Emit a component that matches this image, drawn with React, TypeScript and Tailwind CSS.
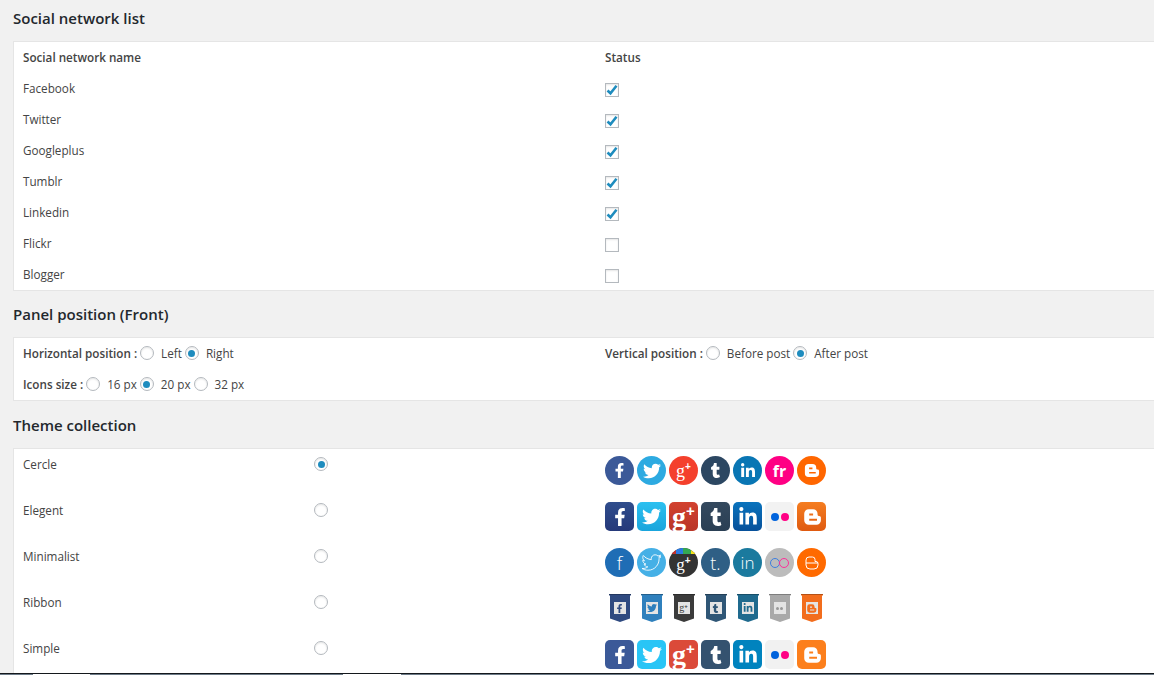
import React from 'react'
import { FaFacebookF, FaTwitter, FaTumblr, FaLinkedinIn } from 'react-icons/fa'

const networks = [
  { name: 'Facebook', on: true },
  { name: 'Twitter', on: true },
  { name: 'Googleplus', on: true },
  { name: 'Tumblr', on: true },
  { name: 'Linkedin', on: true },
  { name: 'Flickr', on: false },
  { name: 'Blogger', on: false },
]

function Radio({ on }: { on?: boolean }) {
  return (
    <span className="w-3.5 h-3.5 mt-[3px] rounded-full border border-[#b4b9be] bg-white flex items-center justify-center shrink-0 shadow-[inset_0_1px_2px_rgba(0,0,0,0.1)]">
      {on && <span className="w-[7px] h-[7px] rounded-full bg-[#1e8cbe]" />}
    </span>
  )
}

function Checkbox({ on }: { on: boolean }) {
  return (
    <span className="w-3.5 h-3.5 border border-[#b4b9be] bg-white flex items-center justify-center shadow-[inset_0_1px_2px_rgba(0,0,0,0.1)]">
      {on && (
        <svg width="12" height="12" viewBox="0 0 12 12" fill="none" stroke="#1e8cbe" strokeWidth="2.6">
          <path d="M1.500 6.500L4.500 9.300L10.500 1.800" />
        </svg>
      )}
    </span>
  )
}

function RadioOption({ label, on }: { label: string; on?: boolean }) {
  return (
    <span className="flex items-start">
      <Radio on={on} />
      <span className="ml-[7px] mr-[3px]">{label}</span>
    </span>
  )
}

function Flickr({ a = '#0063dc', b = '#ff0084' }: { a?: string; b?: string }) {
  return (
    <span className="flex gap-[2px]">
      <span className="w-2 h-2 rounded-full" style={{ background: a }} />
      <span className="w-2 h-2 rounded-full" style={{ background: b }} />
    </span>
  )
}

function BloggerMark({ size = 17 }: { size?: number }) {
  return (
    <svg width={size} height={size} viewBox="0 0 18 18" fill="currentColor" fillRule="evenodd">
      <path d="M6 2h4a4 4 0 0 1 4 4v1a1 1 0 0 0 1 1h.500a1.500 1.500 0 0 1 1.500 1.500V12a4 4 0 0 1-4 4H6a4 4 0 0 1-4-4V6a4 4 0 0 1 4-4zM6.500 5.800h3.500v1.800h-3.500zM6.500 10.500h7v1.800h-7z" />
    </svg>
  )
}

function GPlus({ g, plus, bold }: { g: number; plus: number; bold?: boolean }) {
  return (
    <span className={`font-['Liberation_Serif',serif] leading-none flex items-start ${bold ? 'font-bold' : ''}`}>
      <span style={{ fontSize: g }}>g</span>
      <span className="font-['Liberation_Sans',sans-serif] font-bold" style={{ fontSize: plus }}>+</span>
    </span>
  )
}

function CircleRow() {
  const base = 'w-[29px] h-[29px] rounded-full flex items-center justify-center text-white'
  return (
    <div className="flex gap-[3px]">
      <span className={`${base} bg-[#3b5998]`}><FaFacebookF size={15} /></span>
      <span className={`${base} bg-[#2daae1]`}><FaTwitter size={18} /></span>
      <span className={`${base} bg-[#f4402c]`}><GPlus g={18} plus={10} /></span>
      <span className={`${base} bg-[#2c4762]`}><FaTumblr size={15} /></span>
      <span className={`${base} bg-[#0976b4]`}><FaLinkedinIn size={16} /></span>
      <span className={`${base} bg-[#ff0084] text-[16px] font-bold`}>fr</span>
      <span className={`${base} bg-[#ff6600]`}><BloggerMark /></span>
    </div>
  )
}

function GlossRow() {
  const base = 'w-[29px] h-[29px] rounded-[5px] flex items-center justify-center text-white'
  return (
    <div className="flex gap-[3px]">
      <span className={`${base} bg-gradient-to-b from-[#2f4d8c] to-[#26397a]`}><FaFacebookF size={18} /></span>
      <span className={`${base} bg-gradient-to-b from-[#2cc0f0] to-[#1aa5dc]`}><FaTwitter size={19} /></span>
      <span className={`${base} bg-gradient-to-b from-[#d2412f] to-[#b93527]`}><GPlus g={28} plus={15} bold /></span>
      <span className={`${base} bg-gradient-to-b from-[#34495e] to-[#2a3f54]`}><FaTumblr size={18} /></span>
      <span className={`${base} bg-gradient-to-b from-[#0a73bd] to-[#07509a]`}><FaLinkedinIn size={20} /></span>
      <span className={`${base} bg-[#f2f2f2]`}><Flickr /></span>
      <span className={`${base} bg-gradient-to-b from-[#f57d20] to-[#df5a10]`}><BloggerMark size={20} /></span>
    </div>
  )
}

function MinimalRow() {
  const base = 'w-[29px] h-[29px] rounded-full flex items-center justify-center text-white'
  return (
    <div className="flex gap-[3px]">
      <span className={`${base} bg-[#1f6db5] text-[18px] font-light`}>f</span>
      <span className={`${base} bg-[#45b0e6]`}><FaTwitter size={19} fill="none" stroke="white" strokeWidth={24} /></span>
      <span className={`${base} bg-[#333333] relative overflow-hidden`}>
        <span className="absolute top-0 left-0 right-0 h-[6px] bg-[linear-gradient(90deg,#c4302b_0_25%,#2a7ae2_25%_50%,#34a853_50%_75%,#f7e11a_75%)]" />
        <span className="relative mt-[3px]"><GPlus g={17} plus={10} /></span>
      </span>
      <span className={`${base} bg-[#2f5f85] text-[18px] font-light`}>t.</span>
      <span className={`${base} bg-[#1b7a9e] text-[17px] font-light`}>in</span>
      <span className={`${base} bg-[#bcbcbc]`}>
        <span className="flex">
          <span className="w-[10px] h-[10px] rounded-full border border-[#3d7fe0]" />
          <span className="w-[10px] h-[10px] rounded-full border border-[#ff2f9a] -ml-px" />
        </span>
      </span>
      <span className={`${base} bg-[#ff6a00]`}>
        <svg width="16" height="16" viewBox="0 0 16 16" fill="none" stroke="white" strokeWidth="1">
          <path d="M5 2h3.500a2.500 2.500 0 0 1 2.500 2.500V6.500h1a2 2 0 0 1 2 2v1.500a4 4 0 0 1-4 4H6a4 4 0 0 1-4-4V5a3 3 0 0 1 3-3zM2 8h12" />
        </svg>
      </span>
    </div>
  )
}

function Ribbon({ bg, children }: { bg: string; children: React.ReactNode }) {
  return (
    <span className="w-[29px] h-[29px] flex justify-center">
      <svg width="22" height="29" viewBox="0 0 22 29" className="absolute">
        <path d="M0 0H22V1.500H21V24.500L11 28L1 24.500V1.500H0Z" fill={bg} />
        <path d="M0 0H22V1H0Z" fill="#000" fillOpacity="0.25" />
      </svg>
      <span className="relative w-[12px] h-[12px] mt-[8px] bg-[#e4e4e4] flex items-center justify-center" style={{ color: bg }}>
        {children}
      </span>
    </span>
  )
}

function RibbonRow() {
  return (
    <div className="flex gap-[3px]">
      <Ribbon bg="#2f4a80"><FaFacebookF size={9} /></Ribbon>
      <Ribbon bg="#2f80bd"><FaTwitter size={10} /></Ribbon>
      <Ribbon bg="#3b3b3b"><span className="text-[10px] leading-none"><GPlus g={10} plus={6} /></span></Ribbon>
      <Ribbon bg="#2f5676"><FaTumblr size={9} /></Ribbon>
      <Ribbon bg="#1f6a8e"><FaLinkedinIn size={10} /></Ribbon>
      <Ribbon bg="#a9a9a9">
        <span className="flex gap-px">
          <span className="w-[3px] h-[3px] rounded-full bg-[#999]" />
          <span className="w-[3px] h-[3px] rounded-full bg-[#999]" />
        </span>
      </Ribbon>
      <Ribbon bg="#f26d1d"><BloggerMark size={11} /></Ribbon>
    </div>
  )
}

function SimpleRow() {
  const base = 'w-[29px] h-[29px] rounded-[5px] flex items-center justify-center text-white'
  return (
    <div className="flex gap-[3px]">
      <span className={`${base} bg-[#3b5998]`}><FaFacebookF size={18} /></span>
      <span className={`${base} bg-[#29c5f6]`}><FaTwitter size={20} /></span>
      <span className={`${base} bg-[#db4a39]`}><GPlus g={28} plus={15} bold /></span>
      <span className={`${base} bg-[#34526f]`}><FaTumblr size={18} /></span>
      <span className={`${base} bg-[#0083be]`}><FaLinkedinIn size={20} /></span>
      <span className={`${base} bg-[#f1f1f1]`}><Flickr /></span>
      <span className={`${base} bg-[#fc7f1c]`}><BloggerMark size={20} /></span>
    </div>
  )
}

const themes = [
  { name: 'Cercle', on: true, row: <CircleRow /> },
  { name: 'Elegent', on: false, row: <GlossRow /> },
  { name: 'Minimalist', on: false, row: <MinimalRow /> },
  { name: 'Ribbon', on: false, row: <RibbonRow /> },
  { name: 'Simple', on: false, row: <SimpleRow /> },
]

export default function App() {
  return (
    <div className="relative h-[675px] overflow-hidden bg-[#f1f1f1] pl-[13px] font-['Open_Sans',sans-serif] text-[11.7px] text-[#444]">
      <h2 className="h-[41px] pt-[8px] text-[15px] leading-[20px] font-semibold text-[#23282d]">Social network list</h2>
      <section className="h-[250px] bg-white border border-r-0 border-[#e5e5e5] pl-[9px]">
        <div className="h-[31px] pt-[5px] grid grid-cols-[582px_1fr] font-semibold leading-[20px]">
          <span>Social network name</span>
          <span>Status</span>
        </div>
        {networks.map((n) => (
          <div key={n.name} className="h-[31px] grid grid-cols-[582px_1fr] leading-[20px] pt-[5px]">
            <span>{n.name}</span>
            <span className="pt-[5px]"><Checkbox on={n.on} /></span>
          </div>
        ))}
      </section>

      <h2 className="h-[46px] pt-[13px] text-[15px] leading-[20px] font-semibold text-[#23282d]">Panel position (Front)</h2>
      <section className="h-[64px] bg-white border border-r-0 border-[#e5e5e5] pl-[9px] pt-[5px] leading-[20px]">
        <div className="h-[31px] grid grid-cols-[582px_1fr]">
          <div className="flex items-start">
            <span className="font-semibold mr-[3px]">Horizontal position :</span>
            <RadioOption label="Left" />
            <RadioOption label="Right" on />
          </div>
          <div className="flex items-start">
            <span className="font-semibold mr-[3px]">Vertical position :</span>
            <RadioOption label="Before post" />
            <RadioOption label="After post" on />
          </div>
        </div>
        <div className="flex items-start">
          <span className="font-semibold mr-[3px]">Icons size :</span>
          <RadioOption label="16 px" />
          <RadioOption label="20 px" on />
          <RadioOption label="32 px" />
        </div>
      </section>

      <h2 className="h-[47px] pt-[14px] text-[15px] leading-[20px] font-semibold text-[#23282d]">Theme collection</h2>
      <section className="bg-white border border-r-0 border-[#e5e5e5] pl-[9px]">
        {themes.map((t) => (
          <div key={t.name} className="h-[46px] grid grid-cols-[291px_291px_1fr] pt-[5px] leading-[20px]">
            <span>{t.name}</span>
            <span className="flex items-start"><Radio on={t.on} /></span>
            <span className="pt-[2px]">{t.row}</span>
          </div>
        ))}
      </section>

      <div className="absolute left-0 right-0 bottom-0 h-[2px] flex flex-col">
        <div className="h-px bg-[#14181c]" />
        <div className="h-px flex bg-[#6d7b88]">
          <div className="w-[33px]" />
          <div className="w-[57px] bg-white" />
          <div className="w-[253px]" />
          <div className="w-[58px] bg-white" />
        </div>
      </div>
    </div>
  )
}
